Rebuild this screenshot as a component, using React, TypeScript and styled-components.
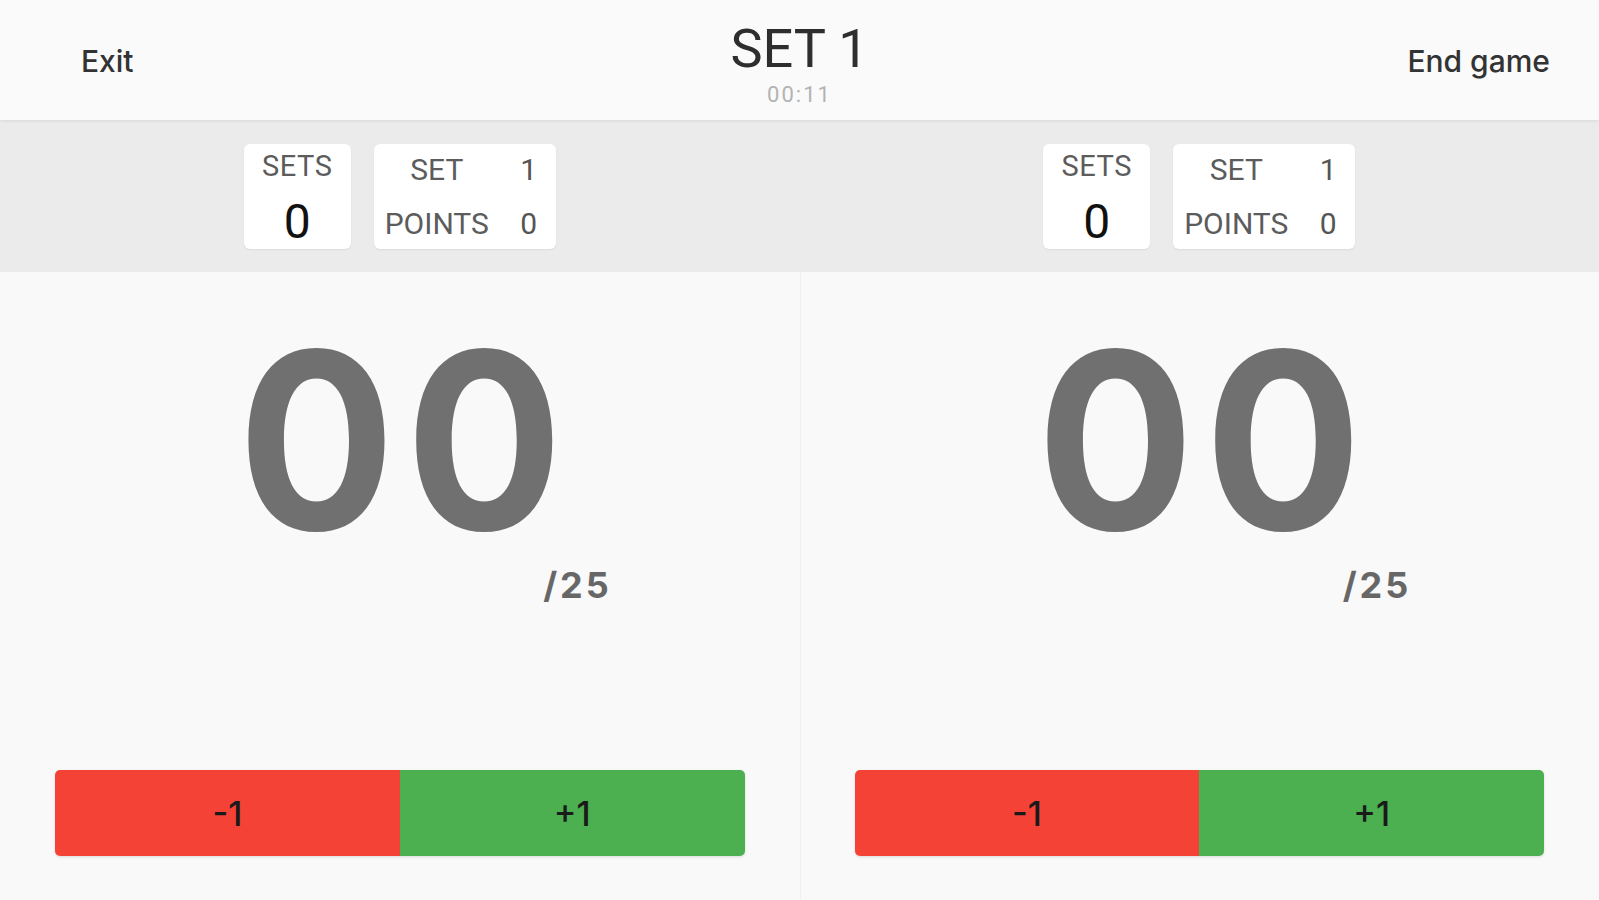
import React from "react";
import styled, { createGlobalStyle } from "styled-components";

const GlobalStyle = createGlobalStyle`
  html, body {
    margin: 0;
    padding: 0;
    background: #f9f9f9;
    font-family: Roboto, "Liberation Sans", Arial, sans-serif;
  }
  #root {
    height: 100vh;
  }
`;

const Screen = styled.div`
  height: 100vh;
  display: flex;
  flex-direction: column;
  background: #f9f9f9;
  overflow: hidden;
`;

const TopBar = styled.header`
  height: 120px;
  flex-shrink: 0;
  display: grid;
  grid-template-columns: 1fr auto 1fr;
  align-items: start;
  background: #fafafa;
  box-shadow: 0 1px 3px rgba(0, 0, 0, 0.08);
  position: relative;
  z-index: 1;
`;

const TextButton = styled.button<{ $side: "left" | "right" }>`
  justify-self: ${(p) => (p.$side === "left" ? "start" : "end")};
  margin: 46px ${(p) => (p.$side === "right" ? "49px" : "0")} 0
    ${(p) => (p.$side === "left" ? "81px" : "0")};
  padding: 0;
  border: none;
  background: none;
  font-family: Inter, Roboto, sans-serif;
  font-size: 30px;
  font-weight: 500;
  line-height: 1;
  color: #333;
  cursor: pointer;
`;

const TitleBlock = styled.div`
  display: flex;
  flex-direction: column;
  align-items: center;
  padding-top: 22px;
`;

const SetTitle = styled.div`
  font-size: 54px;
  font-weight: 400;
  line-height: 1;
  color: #2e2e2e;
`;

const Timer = styled.div`
  margin-top: 8px;
  font-size: 22px;
  line-height: 1;
  letter-spacing: 2px;
  color: #b3b3b3;
`;

const Board = styled.div`
  flex: 1;
  display: grid;
  grid-template-columns: 1fr 1fr;
`;

const TeamPanel = styled.section<{ $divider?: boolean }>`
  display: flex;
  flex-direction: column;
  box-shadow: ${(p) => (p.$divider ? "inset 1px 0 0 #f0f0f0" : "none")};
`;

const StatsBand = styled.div`
  height: 152px;
  display: flex;
  justify-content: center;
  align-items: center;
  gap: 23px;
  background: #ebebeb;
`;

const Card = styled.div<{ $w: number }>`
  width: ${(p) => p.$w}px;
  height: 105px;
  box-sizing: border-box;
  background: #fff;
  border-radius: 6px;
  box-shadow: 0 1px 2px rgba(0, 0, 0, 0.07);
`;

const SetsCard = styled(Card)`
  display: flex;
  flex-direction: column;
  align-items: center;
  padding-top: 8px;
`;

const CardLabel = styled.div`
  font-size: 29px;
  line-height: 1;
  letter-spacing: 0.5px;
  color: #5c5c5c;
`;

const SetsValue = styled.div`
  margin-top: 17px;
  font-size: 48px;
  line-height: 1;
  color: #111;
`;

const DetailCard = styled(Card)`
  display: grid;
  grid-template-columns: 1fr auto;
  column-gap: 27px;
  row-gap: 24px;
  align-content: start;
  padding: 11px 17px 0 8px;
`;

const DetailLabel = styled(CardLabel)`
  font-size: 30px;
  text-align: center;
  letter-spacing: 0;
`;

const DetailValue = styled.div`
  font-size: 30px;
  line-height: 1;
  color: #555;
  text-align: center;
  min-width: 20px;
`;

const PlayArea = styled.div`
  flex: 1;
  display: flex;
  flex-direction: column;
  align-items: center;
  padding: 70px 55px 44px;
`;

const ScoreBlock = styled.div`
  display: flex;
  flex-direction: column;
  align-items: flex-end;
`;

/* the reference digits are a touch narrower than Inter's, so squeeze them */
const BigScore = styled.div`
  font-family: Inter, "DejaVu Sans", sans-serif;
  font-weight: 700;
  font-size: 247px;
  line-height: 0.8;
  letter-spacing: 11px;
  margin-right: -11px;
  transform: scaleX(0.945);
  color: #707070;
`;

const Target = styled.div`
  margin-top: 27px;
  margin-right: -40px;
  font-family: Inter, "DejaVu Sans", sans-serif;
  font-weight: 700;
  font-size: 36px;
  line-height: 1;
  letter-spacing: 3px;
  color: #676767;
`;

const ButtonBar = styled.div`
  margin-top: auto;
  width: 100%;
  height: 86px;
  display: flex;
  border-radius: 5px;
  overflow: hidden;
  box-shadow: 0 1px 3px rgba(0, 0, 0, 0.12);
`;

const ScoreButton = styled.button<{ $tone: "minus" | "plus" }>`
  flex: 1;
  border: none;
  margin: 0;
  background: ${(p) => (p.$tone === "minus" ? "#f44336" : "#4caf50")};
  font-family: Inter, Roboto, sans-serif;
  font-size: 34px;
  font-weight: 500;
  color: #1a1a1a;
  cursor: pointer;
`;

function Team({ divider }: { divider?: boolean }) {
  return (
    <TeamPanel $divider={divider}>
      <StatsBand>
        <SetsCard $w={107}>
          <CardLabel>SETS</CardLabel>
          <SetsValue>0</SetsValue>
        </SetsCard>
        <DetailCard $w={182}>
          <DetailLabel>SET</DetailLabel>
          <DetailValue>1</DetailValue>
          <DetailLabel>POINTS</DetailLabel>
          <DetailValue>0</DetailValue>
        </DetailCard>
      </StatsBand>
      <PlayArea>
        <ScoreBlock>
          <BigScore>00</BigScore>
          <Target>/25</Target>
        </ScoreBlock>
        <ButtonBar>
          <ScoreButton $tone="minus">-1</ScoreButton>
          <ScoreButton $tone="plus">+1</ScoreButton>
        </ButtonBar>
      </PlayArea>
    </TeamPanel>
  );
}

export default function App() {
  return (
    <>
      <GlobalStyle />
      <Screen>
        <TopBar>
          <TextButton $side="left">Exit</TextButton>
          <TitleBlock>
            <SetTitle>SET 1</SetTitle>
            <Timer>00:11</Timer>
          </TitleBlock>
          <TextButton $side="right">End game</TextButton>
        </TopBar>
        <Board>
          <Team />
          <Team divider />
        </Board>
      </Screen>
    </>
  );
}
